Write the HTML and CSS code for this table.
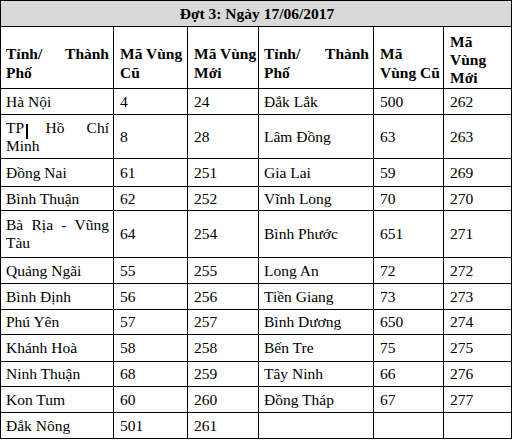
FILE: index.html
```html
<!DOCTYPE html>
<html lang="vi">
<head>
<meta charset="utf-8">
<title>Đợt 3: Ngày 17/06/2017</title>
<link rel="stylesheet" href="styles.css">
</head>
<body>
<table class="codes">
  <colgroup>
    <col class="c-name"><col class="c-old"><col class="c-new">
    <col class="c-name2"><col class="c-old2"><col class="c-new2">
  </colgroup>
  <tr class="title-row"><th colspan="6" class="title">Đợt 3: Ngày 17/06/2017</th></tr>
  <tr class="head-row">
    <th class="name">Tỉnh/ Thành Phố</th>
    <th class="stack">Mã Vùng<br>Cũ</th>
    <th class="stack">Mã Vùng<br>Mới</th>
    <th class="name">Tỉnh/ Thành Phố</th>
    <th class="stack">Mã<br>Vùng Cũ</th>
    <th class="stack three">Mã<br>Vùng<br>Mới</th>
  </tr>
  <tr class="h26"><td class="name">Hà Nội</td><td>4</td><td>24</td><td class="name">Đắk Lắk</td><td>500</td><td>262</td></tr>
  <tr class="h44"><td class="name cursor">TP Hồ Chí Minh</td><td>8</td><td>28</td><td class="name">Lâm Đồng</td><td>63</td><td>263</td></tr>
  <tr class="h28"><td class="name">Đồng Nai</td><td>61</td><td>251</td><td class="name">Gia Lai</td><td>59</td><td>269</td></tr>
  <tr class="h24"><td class="name">Bình Thuận</td><td>62</td><td>252</td><td class="name">Vĩnh Long</td><td>70</td><td>270</td></tr>
  <tr class="h47"><td class="name">Bà Rịa - Vũng Tàu</td><td>64</td><td>254</td><td class="name">Bình Phước</td><td>651</td><td>271</td></tr>
  <tr class="h26"><td class="name">Quảng Ngãi</td><td>55</td><td>255</td><td class="name">Long An</td><td>72</td><td>272</td></tr>
  <tr class="h26"><td class="name">Bình Định</td><td>56</td><td>256</td><td class="name">Tiền Giang</td><td>73</td><td>273</td></tr>
  <tr class="h25"><td class="name">Phú Yên</td><td>57</td><td>257</td><td class="name">Bình Dương</td><td>650</td><td>274</td></tr>
  <tr class="h27"><td class="name">Khánh Hoà</td><td>58</td><td>258</td><td class="name">Bến Tre</td><td>75</td><td>275</td></tr>
  <tr class="h25"><td class="name">Ninh Thuận</td><td>68</td><td>259</td><td class="name">Tây Ninh</td><td>66</td><td>276</td></tr>
  <tr class="h26"><td class="name">Kon Tum</td><td>60</td><td>260</td><td class="name">Đồng Tháp</td><td>67</td><td>277</td></tr>
  <tr class="h26"><td class="name">Đắk Nông</td><td>501</td><td>261</td><td class="name"></td><td></td><td></td></tr>
</table>
</body>
</html>
```
FILE: styles.css
```css
html, body {
  margin: 0;
  padding: 0;
  background: #ffffff;
}

body {
  font-family: "Liberation Serif", "Times New Roman", serif;
  font-size: 15.5px;
  color: #000000;
}

.codes {
  border-collapse: collapse;
  table-layout: fixed;
  width: 511px;
}

.c-name { width: 113px; }
.c-old { width: 74px; }
.c-new { width: 71px; }
.c-name2 { width: 115px; }
.c-old2 { width: 70px; }
.c-new2 { width: 68px; }

.codes th,
.codes td {
  border: 1px solid #000000;
  padding: 0 4px 0 6px;
  text-align: left;
  vertical-align: middle;
  line-height: 18px;
  font-weight: normal;
}

.codes th {
  font-weight: bold;
}

.head-row th {
  height: 51px;
  padding-top: 10px;
  line-height: 19px;
}

.head-row th.three {
  padding-top: 4px;
  height: 57px;
  line-height: 18px;
}

.codes .stack {
  white-space: nowrap;
}

.codes .name {
  text-align: justify;
  padding-left: 5px;
}

.codes .title {
  text-align: center;
  background: #d9d9d9;
  height: 25px;
}

.h24 td { height: 23px; }
.h25 td { height: 24px; }
.h26 td { height: 25px; }
.h27 td { height: 26px; }
.h28 td { height: 27px; }
.h44 td { height: 43px; }
.h47 td { height: 46px; }

.codes .cursor {
  background: linear-gradient(#000000, #000000) no-repeat 25px 9px / 2px 15px;
}
```
